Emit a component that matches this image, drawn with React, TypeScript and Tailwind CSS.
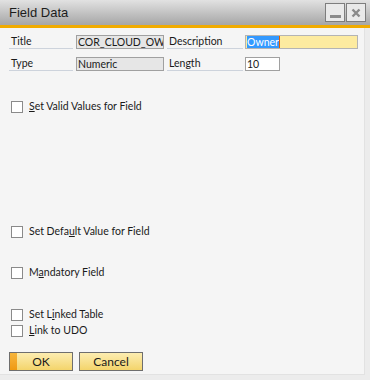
import React from "react";

function Check({ label, u }: { label: string; u: number }) {
  return (
    <div className="flex items-center h-[14px]">
      <div className="w-[12px] h-[12px] border border-[#8a8a8a] bg-white ml-[11px]" />
      <span className="ml-[6px]">
        {label.slice(0, u)}
        <span className="underline">{label.slice(u, u + 1)}</span>
        {label.slice(u + 1)}
      </span>
    </div>
  );
}

export default function App() {
  return (
    <div
      className="w-[370px] h-[380px] bg-[#ececec] text-[10.5px] text-[#1a1a1a] relative overflow-hidden"
      style={{ fontFamily: "Lato, 'Liberation Sans', Arial, sans-serif" }}
    >
      <div className="w-[365px] h-[375px] bg-[#f5f5f5] border-r border-b border-[#e2e2e2] flex flex-col">
        {/* title bar */}
        <div className="h-[25px] w-[370px] bg-gradient-to-b from-[#e2e2e2] to-[#a6a6a6] flex items-center pl-[9px] pr-[4px] shrink-0">
          <span className="text-[13px] text-[#1c1c1c] flex-1" style={{ fontFamily: "'Liberation Sans', Arial, sans-serif" }}>Field Data</span>
          <div className="flex gap-[1px]">
            <div className="w-[20px] h-[19px] border border-[#7d7d7d] bg-[#e9e9e9] flex items-end justify-center pb-[3px]">
              <div className="w-[11px] h-[3px] bg-[#8a8a8a]" />
            </div>
            <div className="w-[20px] h-[19px] border border-[#7d7d7d] bg-[#e9e9e9] flex items-center justify-center">
              <svg width="10" height="10" viewBox="0 0 10 10">
                <path d="M1.5 1.5 L8.5 8.5 M8.5 1.5 L1.5 8.5" stroke="#8a8a8a" strokeWidth="2.4" />
              </svg>
            </div>
          </div>
        </div>
        <div className="h-[3px] w-[370px] bg-[#f0ab00] shrink-0" />

        {/* fields */}
        <div className="flex flex-col gap-[8px] mt-[7px]">
          <div className="flex items-end h-[14px]">
            <div className="w-[64px] ml-[9px] border-b border-[#cdd3dc] h-[14px] pl-[2px] leading-[13px]">Title</div>
            <div className="ml-[3px] w-[88px] h-[14px] bg-[#e6e6e6] border border-[#a0a0a0] leading-[12px] pl-[1px] overflow-hidden whitespace-nowrap">COR_CLOUD_OWN</div>
            <div className="ml-[3px] w-[76px] border-b border-[#cdd3dc] h-[14px] pl-[2px] leading-[13px]">Description</div>
            <div className="ml-[2px] w-[113px] h-[14px] bg-[#fdeba0] border border-[#b4b4b4] leading-[12px] pl-[1px] flex items-center">
              <span className="bg-[#3399ff] text-white">Owner</span>
              <span className="w-[1px] h-[12px] bg-[#e06000]" />
            </div>
          </div>
          <div className="flex items-end h-[14px]">
            <div className="w-[64px] ml-[9px] border-b border-[#cdd3dc] h-[14px] pl-[2px] leading-[13px]">Type</div>
            <div className="ml-[3px] w-[88px] h-[14px] bg-[#e6e6e6] border border-[#a0a0a0] leading-[12px] pl-[1px]">Numeric</div>
            <div className="ml-[3px] w-[76px] border-b border-[#cdd3dc] h-[14px] pl-[2px] leading-[13px]">Length</div>
            <div className="ml-[2px] w-[35px] h-[14px] bg-white border border-[#a0a0a0] leading-[12px] pl-[1px]">10</div>
          </div>
        </div>

        <div className="mt-[29px]">
          <Check label="Set Valid Values for Field" u={0} />
        </div>
        <div className="mt-[111px]">
          <Check label="Set Default Value for Field" u={8} />
        </div>
        <div className="mt-[27px]">
          <Check label="Mandatory Field" u={1} />
        </div>
        <div className="mt-[28px]">
          <Check label="Set Linked Table" u={5} />
        </div>
        <div className="mt-[2px]">
          <Check label="Link to UDO" u={0} />
        </div>

        <div className="flex gap-[6px] ml-[9px] mt-[14px]">
          <div className="w-[64px] h-[19px] border border-[#6e6e6e] bg-gradient-to-b from-[#fcedb0] to-[#f4d46a] relative flex items-center justify-center">
            <div className="absolute left-0 top-0 bottom-0 w-[7px] bg-gradient-to-b from-[#f6b53a] to-[#ef9a10]" />
            <span className="text-[12px]">OK</span>
          </div>
          <div className="w-[64px] h-[19px] border border-[#6e6e6e] bg-gradient-to-b from-[#fcedb0] to-[#f4d46a] flex items-center justify-center">
            <span className="text-[12px]">Cancel</span>
          </div>
        </div>
      </div>
    </div>
  );
}
